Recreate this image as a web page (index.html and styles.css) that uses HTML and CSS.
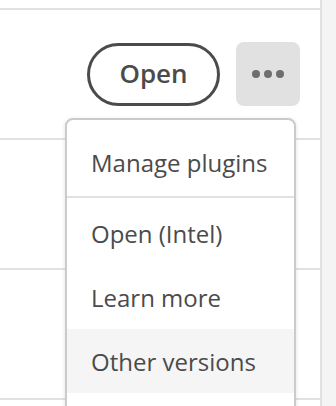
FILE: index.html
```
<!DOCTYPE html>
<html lang="en">
<head>
  <meta charset="UTF-8" />
  <meta name="viewport" content="width=device-width, initial-scale=1.0"/>
  <title>Apps</title>
  <link rel="stylesheet" href="styles.css">
</head>
<body>
  <div class="panel">
    <div class="row row-partial"></div>

    <div class="row row-app">
      <div class="actions">
        <button class="btn-open">Open</button>
        <button class="btn-more" aria-label="More actions">
          <span class="dot"></span><span class="dot"></span><span class="dot"></span>
        </button>

        <!-- dropdown for the more button -->
        <div class="menu">
          <div class="menu-item">Manage plugins</div>
          <div class="menu-divider"></div>
          <div class="menu-item">Open (Intel)</div>
          <div class="menu-item">Learn more</div>
          <div class="menu-item is-hover">Other versions</div>
        </div>
      </div>
    </div>

    <div class="row"></div>
    <div class="row"></div>
  </div>
</body>
</html>
```

FILE: styles.css
```
body {
  margin: 0;
  background-color: #f4f4f4;
  font-family: 'Open Sans', 'Noto Sans', sans-serif;
  color: #4b4b4b;
  height: 406px;
  overflow: hidden;
}

.panel {
  width: 320px;
  height: 406px;
  background: white;
  border-right: 2px solid #e1e1e1;
}

.row {
  height: 128px;
  border-bottom: 2px solid #e1e1e1;
}

.row-partial {
  height: 8px;
}

.row-app {
  display: flex;
  align-items: center;
  justify-content: flex-end;
  padding-right: 20px;
}

.actions {
  position: relative;
  display: flex;
  align-items: center;
  gap: 16px;
}

.btn-open {
  box-sizing: border-box;
  width: 133px;
  height: 63px;
  border: 3px solid #4b4b4b;
  border-radius: 32px;
  background: white;
  color: #4b4b4b;
  font-family: inherit;
  font-size: 26px;
  font-weight: 600;
  padding: 0;
  padding-bottom: 2px;
}

.btn-more {
  width: 64px;
  height: 64px;
  border: none;
  border-radius: 8px;
  background-color: #e1e1e1;
  display: flex;
  align-items: center;
  justify-content: center;
  gap: 4px;
  padding: 0;
}

.dot {
  width: 8px;
  height: 8px;
  border-radius: 50%;
  background-color: #6e6e6e;
}

.menu {
  position: absolute;
  top: calc(100% + 12px);
  right: 4px;
  box-sizing: border-box;
  width: 231px;
  padding: 10px 0 40px;
  background: white;
  border: 2px solid #cbcbcb;
  border-radius: 8px;
  box-shadow: 0 1px 4px rgba(0, 0, 0, 0.12);
  z-index: 5;
}

.menu-item {
  height: 64px;
  display: flex;
  align-items: center;
  padding-left: 24px;
  font-size: 24px;
  white-space: nowrap;
}

.menu-item.is-hover {
  background-color: #f5f5f5;
}

.menu-divider {
  height: 2px;
  background-color: #e1e1e1;
  margin: 2px 0 3px;
}
```
